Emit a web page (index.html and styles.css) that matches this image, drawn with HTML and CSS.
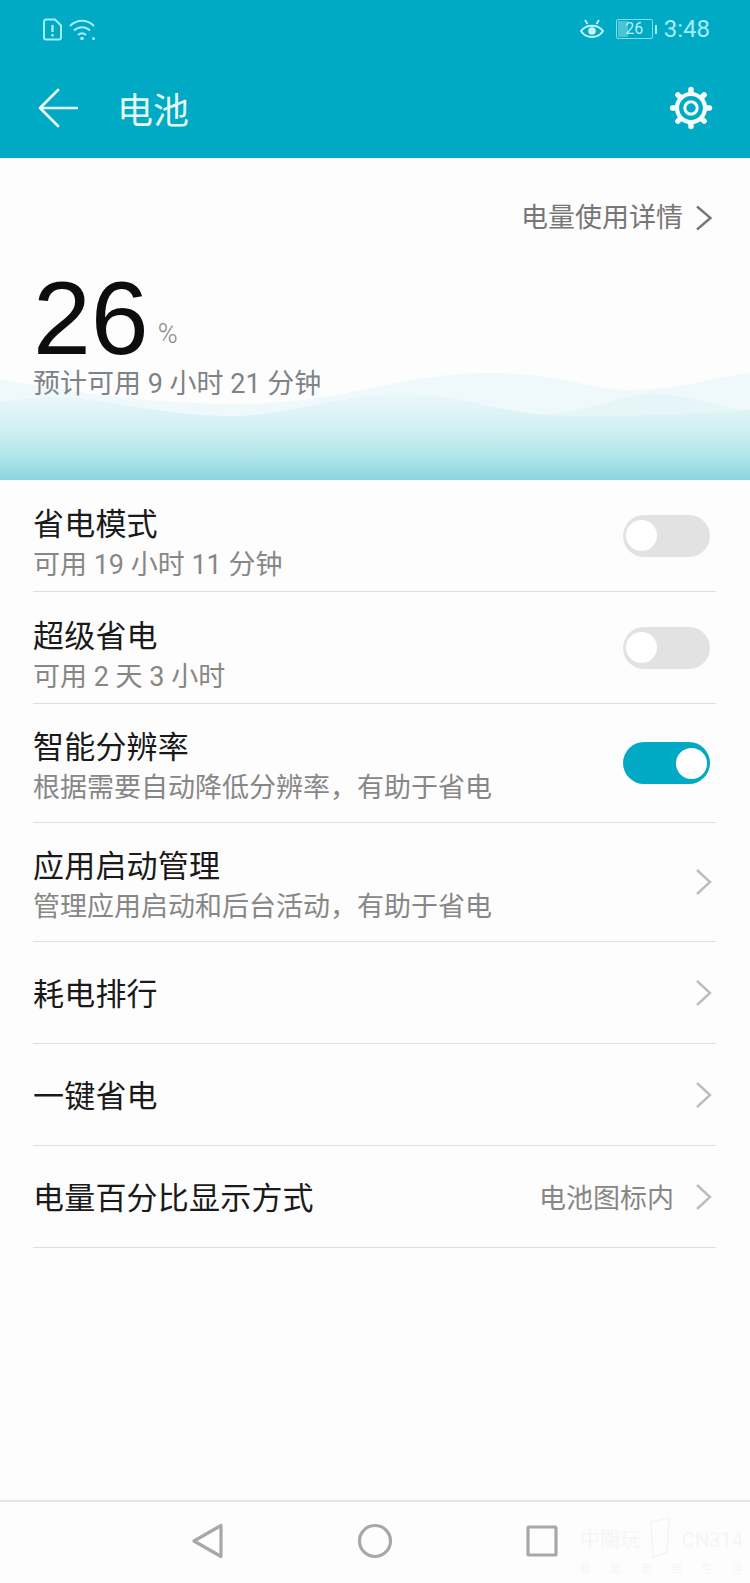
FILE: index.html
```html
<!DOCTYPE html>
<html lang="zh-CN">
<head>
<meta charset="utf-8"/>
<meta content="width=device-width, initial-scale=1.0" name="viewport"/>
<title>电池</title>
<link rel="stylesheet" href="styles.css">
</head>
<body>
<header>
  <div class="status-bar">
    <div class="status-left">
      <svg width="20" height="23" viewBox="0 0 20 23" fill="none" stroke="#a5edf5" stroke-width="2">
        <path d="M3 1.500h9l6 6v12a2 2 0 0 1-2 2H3a2 2 0 0 1-2-2v-16a2 2 0 0 1 2-2z"/>
        <path d="M9.500 7v7M9.500 16v2.500" stroke-width="2.400"/>
      </svg>
      <svg width="27" height="23" viewBox="0 0 27 23" fill="none" stroke="#a5edf5" stroke-width="2">
        <path d="M1 8c7-7 17-7 24 0M5 12.500c4.500-4.500 11.500-4.500 16 0M9 17c2.500-2.500 5.500-2.500 8 0"/>
        <circle cx="13" cy="20.500" r="1.800" fill="#a5edf5" stroke="none"/>
        <circle cx="24.500" cy="20.500" r="1.500" fill="#a5edf5" stroke="none"/>
      </svg>
    </div>
    <div class="status-right">
      <svg width="24" height="20" viewBox="0 0 24 20" fill="none" stroke="#c8f5fa" stroke-width="2">
        <path d="M1 12c5-7 17-7 22 0c-5 8-17 8-22 0z"/>
        <circle cx="12" cy="12" r="3.800" fill="#c8f5fa" stroke="none"/>
        <path d="M5 1l2.500 4M19 1l-2.500 4" stroke-width="1.800"/>
      </svg>
      <div class="battery">
        <div class="battery-fill"></div>
        <span>26</span>
      </div>
      <div class="battery-nub"></div>
      <span class="clock">3:48</span>
    </div>
  </div>
  <div class="toolbar">
    <svg class="back" width="40" height="40" viewBox="0 0 40 40" fill="none" stroke="#eafcfe" stroke-width="2.600" stroke-linecap="round" stroke-linejoin="round">
      <path d="M20 2L2 20l18 18M2 20h37"/>
    </svg>
    <h1>电池</h1>
    <svg class="gear" width="44" height="44" viewBox="0 0 44 44" fill="none" stroke="#f4fdfe">
      <circle cx="22" cy="22" r="14" stroke-width="4.200"/>
      <circle cx="22" cy="22" r="6.200" stroke-width="3"/>
      <path d="M22 7v-3.500M22 37v3.500M7 22h-3.500M37 22h3.500M11.400 11.400l-2.500-2.500M32.600 11.400l2.500-2.500M11.400 32.600l-2.500 2.500M32.600 32.600l2.500 2.500" stroke-width="5.500" stroke-linecap="round"/>
    </svg>
  </div>
</header>

<main>
  <section class="hero">
    <svg class="waves" width="750" height="118" viewBox="0 0 750 118" preserveAspectRatio="none">
      <defs>
        <linearGradient id="front" x1="0" y1="0" x2="0" y2="1">
          <stop offset="0" stop-color="#eaf7f9"/>
          <stop offset="0.4" stop-color="#d3f0f3"/>
          <stop offset="0.72" stop-color="#b0e5ea"/>
          <stop offset="1" stop-color="#8bd6df"/>
        </linearGradient>
      </defs>
      <path d="M0 18C60 26 130 42 240 42C340 42 400 11 490 11C560 11 590 28 630 28C680 28 710 16 750 11V118H0z" fill="#eff8fa"/>
      <path d="M540 52C590 52 620 32 650 32C690 32 720 46 750 50V118H540z" fill="#e6f5f8"/>
      <path d="M0 40C30 36 50 34 70 36C120 40 170 54 230 54C290 54 340 32 400 32C470 32 500 54 570 54C640 54 700 52 750 48V118H0z" fill="url(#front)"/>
    </svg>
    <a class="usage-link">电量使用详情
      <svg width="18" height="26" viewBox="0 0 18 26" fill="none" stroke="#777" stroke-width="2.400"><path d="M2 1.500L15.500 13L2 24.500"/></svg>
    </a>
    <div class="level"><span class="level-num">26</span><span class="level-unit">%</span></div>
    <p class="estimate">预计可用 9 小时 21 分钟</p>
  </section>

  <ul class="settings">
    <li class="row row-sub">
      <div class="row-text"><div class="row-title">省电模式</div><div class="row-desc">可用 19 小时 11 分钟</div></div>
      <span class="switch"></span>
    </li>
    <li class="row row-sub">
      <div class="row-text"><div class="row-title">超级省电</div><div class="row-desc">可用 2 天 3 小时</div></div>
      <span class="switch"></span>
    </li>
    <li class="row row-tall">
      <div class="row-text"><div class="row-title">智能分辨率</div><div class="row-desc">根据需要自动降低分辨率，有助于省电</div></div>
      <span class="switch on"></span>
    </li>
    <li class="row row-tall">
      <div class="row-text"><div class="row-title">应用启动管理</div><div class="row-desc">管理应用启动和后台活动，有助于省电</div></div>
      <svg class="chev" width="18" height="28" viewBox="0 0 18 28" fill="none" stroke="#bdbdbd" stroke-width="2.400"><path d="M2 2l13 12L2 26"/></svg>
    </li>
    <li class="row">
      <div class="row-title">耗电排行</div>
      <svg class="chev" width="18" height="28" viewBox="0 0 18 28" fill="none" stroke="#bdbdbd" stroke-width="2.400"><path d="M2 2l13 12L2 26"/></svg>
    </li>
    <li class="row">
      <div class="row-title">一键省电</div>
      <svg class="chev" width="18" height="28" viewBox="0 0 18 28" fill="none" stroke="#bdbdbd" stroke-width="2.400"><path d="M2 2l13 12L2 26"/></svg>
    </li>
    <li class="row">
      <div class="row-title">电量百分比显示方式</div>
      <span class="row-value">电池图标内</span>
      <svg class="chev" width="18" height="28" viewBox="0 0 18 28" fill="none" stroke="#bdbdbd" stroke-width="2.400"><path d="M2 2l13 12L2 26"/></svg>
    </li>
  </ul>
</main>

<nav class="nav-bar">
  <svg width="32" height="36" viewBox="0 0 32 36" fill="none" stroke="#a8a8a8" stroke-width="3.200" stroke-linejoin="round"><path d="M29 2.500V33.500L2 18z"/></svg>
  <svg width="36" height="36" viewBox="0 0 36 36" fill="none" stroke="#a8a8a8" stroke-width="3.200"><circle cx="18" cy="18" r="15.500"/></svg>
  <svg width="32" height="32" viewBox="0 0 32 32" fill="none" stroke="#a8a8a8" stroke-width="3.200" stroke-linejoin="round"><rect x="2" y="2" width="28" height="28" rx="1"/></svg>
  <div class="watermark">
    <div class="wm-top">
      <span>中關玩</span>
      <svg class="wm-logo" width="24" height="44" viewBox="0 0 24 44" fill="none" stroke="#f5f5f5" stroke-width="1.500"><path d="M2 6l18-4-2 34-14 6z"/></svg>
      <span>CN314</span>
    </div>
    <div class="wm-sub">智 能 新 资 生 活</div>
  </div>
</nav>
</body>
</html>
```

FILE: styles.css
```css
* { box-sizing: border-box; }
html, body { height: 100%; }
body {
  margin: 0;
  width: 750px;
  height: 1583px;
  display: flex;
  flex-direction: column;
  font-family: "Roboto", "Noto Sans CJK SC", sans-serif;
  background-color: #fdfdfd;
  color: #1a1a1a;
  overflow: hidden;
}

/* top teal area */
header {
  height: 158px;
  background-color: #00aac4;
  padding: 17px 40px 0 38px;
}
.status-bar {
  display: flex;
  justify-content: space-between;
  align-items: center;
  height: 24px;
}
.status-left {
  display: flex;
  align-items: center;
  gap: 6px;
  padding-left: 5px;
}
.status-right {
  display: flex;
  align-items: center;
}
.battery {
  position: relative;
  width: 37px;
  height: 20px;
  margin-left: 12px;
  border: 1px solid #7fdce8;
  border-radius: 2px;
  color: #b8f0f6;
  font-size: 16px;
  line-height: 18px;
  text-align: center;
}
.battery span { position: relative; }
.battery-fill {
  position: absolute;
  left: 1px;
  top: 1px;
  bottom: 1px;
  width: 10px;
  background-color: #4cc4d6;
}
.battery-nub {
  width: 2px;
  height: 9px;
  margin: 0 7px 0 2px;
  background-color: #a5edf5;
}
.clock {
  font-size: 24px;
  color: #a5edf5;
}
.toolbar {
  display: flex;
  align-items: center;
  height: 40px;
  margin-top: 47px;
}
.toolbar h1 {
  flex: 1;
  margin: 0 0 0 39px;
  font-size: 36px;
  font-weight: 400;
  color: #e4fafc;
}
.gear { margin-right: -3px; }

/* battery summary */
.hero {
  position: relative;
  height: 322px;
  padding: 0 34px 0 33px;
}
.waves {
  position: absolute;
  left: 0;
  bottom: 0;
}
.usage-link {
  position: relative;
  display: flex;
  justify-content: flex-end;
  align-items: center;
  gap: 12px;
  padding: 44px 3px 0 0;
  font-size: 27px;
  line-height: 32px;
  color: #777;
}
.level {
  position: relative;
  display: flex;
  align-items: flex-end;
  margin-top: 45px;
  height: 78px;
}
.level-num {
  font-family: "Liberation Sans", sans-serif;
  font-size: 104px;
  line-height: 78px;
  color: #0d0d0d;
}
.level-unit {
  margin: 0 0 9px 9px;
  font-size: 27px;
  line-height: 27px;
  font-weight: 300;
  color: #888;
}
.estimate {
  position: relative;
  margin: 11px 0 0;
  font-size: 27px;
  line-height: 32px;
  color: #7d8386;
}

/* settings list */
.settings {
  list-style: none;
  margin: 0;
  padding: 0 34px 0 33px;
}
.row {
  display: flex;
  align-items: center;
  height: 102px;
  border-bottom: 1px solid #dedede;
}
.row-sub { height: 112px; }
.row-tall { height: 119px; }
.row-text { flex: 1; }
.row-sub .row-text { padding-top: 16px; }
.row-tall .row-text { padding-top: 6px; }
.row-title {
  flex: 1;
  font-size: 31px;
  line-height: 38px;
  letter-spacing: 0.2px;
}
.row > .row-title { padding-top: 4px; }
.row-desc {
  margin-top: 5px;
  font-size: 27px;
  line-height: 32px;
  color: #878787;
}
.row-value {
  margin-right: 21px;
  font-size: 27px;
  color: #878787;
}
.chev { margin-right: 3px; }
.switch {
  position: relative;
  width: 87px;
  height: 42px;
  margin-right: 6px;
  border-radius: 21px;
  background-color: #e2e2e2;
}
.switch:before {
  position: absolute;
  content: "";
  left: 3px;
  top: 5px;
  width: 31px;
  height: 31px;
  border-radius: 50%;
  background-color: #fff;
}
.switch.on { background-color: #00aac4; }
.switch.on:before {
  left: 53px;
  top: 6px;
}

/* android nav */
.nav-bar {
  position: relative;
  margin-top: auto;
  height: 83px;
  display: flex;
  align-items: center;
  padding: 0 0 3px 192px;
  gap: 133px;
  border-top: 2px solid #e4e4e4;
}
.watermark {
  position: absolute;
  left: 580px;
  width: 163px;
  top: 24px;
  color: #f5f5f5;
  white-space: nowrap;
}
.wm-top {
  display: flex;
  justify-content: space-between;
  align-items: center;
  font-size: 20px;
  line-height: 28px;
}
.wm-logo { margin: -10px 0 -6px; }
.wm-sub {
  margin-top: 9px;
  font-size: 11px;
  line-height: 13px;
  white-space: normal;
  text-align: justify;
  text-align-last: justify;
}
```
